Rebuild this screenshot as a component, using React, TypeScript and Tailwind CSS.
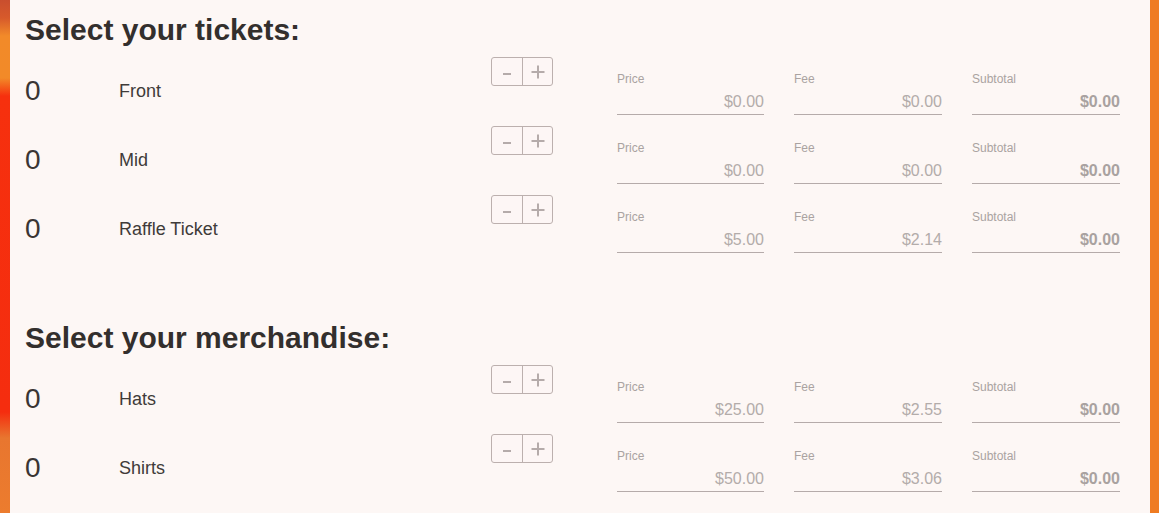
import React from "react";

type Item = { name: string; price: string; fee: string };

const tickets: Item[] = [
  { name: "Front", price: "$0.00", fee: "$0.00" },
  { name: "Mid", price: "$0.00", fee: "$0.00" },
  { name: "Raffle Ticket", price: "$5.00", fee: "$2.14" },
];

const merch: Item[] = [
  { name: "Hats", price: "$25.00", fee: "$2.55" },
  { name: "Shirts", price: "$50.00", fee: "$3.06" },
];

function Field({ label, value, bold, wide }: { label: string; value: string; bold?: boolean; wide?: boolean }) {
  return (
    <div className={(wide ? "w-[148px]" : "w-[147px]") + " mt-[22px] flex flex-col"}>
      <div className="h-[14px] text-[12px] leading-[14px] text-[#aaa3a1]">{label}</div>
      <div
        className={
          "mt-[6px] pb-[3px] text-right text-[16px] leading-[19px] border-b border-[#b5abaa] " +
          (bold ? "font-bold text-[#a9a2a0]" : "text-[#b3acaa]")
        }
      >
        {value}
      </div>
    </div>
  );
}

function Stepper() {
  return (
    <div className="mt-[7px] w-[62px] h-[29px] flex border border-[#bcb0ae] rounded-[3px] bg-[#fdf6f5]">
      <div className="w-[31px] h-full flex items-center justify-center border-r border-[#bcb0ae]">
        <div className="w-[8px] h-[2px] bg-[#b5abaa] mt-[4px]" />
      </div>
      <div className="flex-1 h-full flex items-center justify-center">
        <svg width="14" height="14" viewBox="0 0 14 14">
          <rect x="6" y="0.5" width="2" height="13" fill="#b5abaa" />
          <rect x="0.5" y="6" width="13" height="2" fill="#b5abaa" />
        </svg>
      </div>
    </div>
  );
}

function Row({ item }: { item: Item }) {
  return (
    <div className="h-[69px] flex items-start">
      <div className="w-[94px] mt-[27px] text-[28px] leading-[28px] text-[#3a3533]">0</div>
      <div className="w-[372px] mt-[31px] text-[18px] leading-[20px] text-[#403b39]">{item.name}</div>
      <div className="w-[126px]">
        <Stepper />
      </div>
      <div className="flex gap-[30px]">
        <Field label="Price" value={item.price} />
        <Field label="Fee" value={item.fee} wide />
        <Field label="Subtotal" value="$0.00" bold wide />
      </div>
    </div>
  );
}

export default function App() {
  return (
    <div
      className="w-[1159px] h-[513px] overflow-hidden flex"
      style={{ fontFamily: '"Liberation Sans", Arial, sans-serif' }}
    >
      <div className="w-[10px] h-full shrink-0 bg-[linear-gradient(180deg,#c94e2e_0px,#d75a2b_18px,#f28a29_36px,#f28a28_78px,#f6300e_96px,#f52d0f_412px,#e8762f_438px,#ec7c2e_100%)]" />
      <div className="w-[1140px] h-full shrink-0 bg-[#fdf7f5] pl-[15px] pt-[12px]">
        <h2 className="h-[36px] text-[30px] leading-[36px] font-bold text-[#332f2d]">Select your tickets:</h2>
        <div className="mt-[2px]">
          {tickets.map((t) => (
            <Row key={t.name} item={t} />
          ))}
        </div>
        <h2 className="mt-[63px] h-[36px] text-[30px] leading-[36px] font-bold text-[#332f2d]">
          Select your merchandise:
        </h2>
        <div className="mt-[2px]">
          {merch.map((t) => (
            <Row key={t.name} item={t} />
          ))}
        </div>
      </div>
      <div className="flex-1 h-full bg-[#ef7b22]" />
    </div>
  );
}
